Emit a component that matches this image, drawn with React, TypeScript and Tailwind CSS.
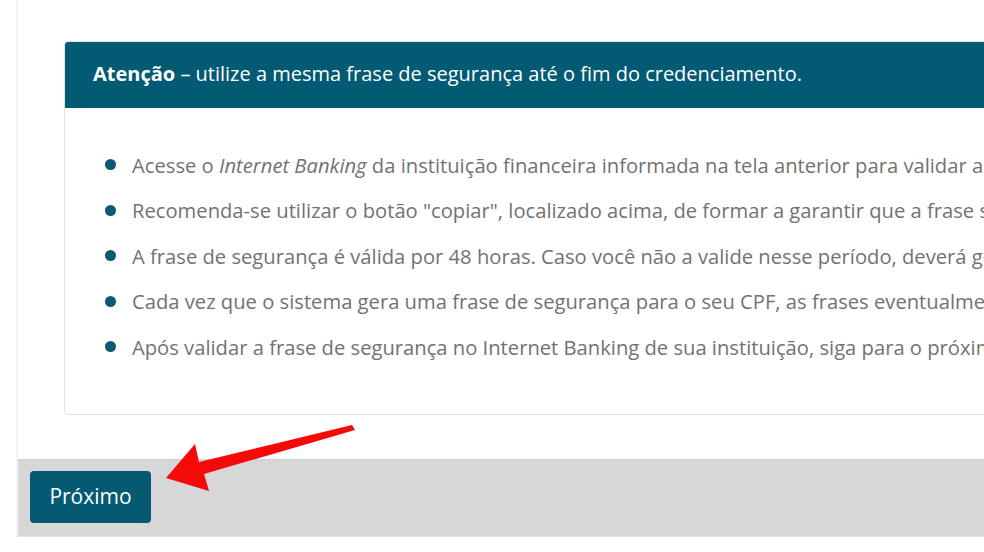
import React from 'react';

const ITEMS: React.ReactNode[] = [
  <>Acesse o <em>Internet Banking</em> da instituição financeira informada na tela anterior para validar a frase de segurança.</>,
  <>Recomenda-se utilizar o botão "copiar", localizado acima, de formar a garantir que a frase seja copiada corretamente.</>,
  <>A frase de segurança é válida por 48 horas. Caso você não a valide nesse período, deverá gerar uma nova frase.</>,
  <>Cada vez que o sistema gera uma frase de segurança para o seu CPF, as frases eventualmente geradas antes perdem a validade.</>,
  <>Após validar a frase de segurança no Internet Banking de sua instituição, siga para o próximo passo.</>,
];

function Arrow() {
  return (
    <svg
      className="absolute left-0 top-0 pointer-events-none"
      width="984"
      height="552"
      viewBox="0 0 984 552"
    >
      <polygon
        points="166,478 195,444 199,462 352,425 355,430 204,474 209,491"
        fill="#f50a0a"
      />
    </svg>
  );
}

export default function App() {
  return (
    <div
      className="relative w-[984px] h-[552px] overflow-hidden bg-white"
      style={{ fontFamily: '"Open Sans", "Noto Sans", sans-serif' }}
    >
      <div className="ml-4 h-[537px] border-l-2 border-[#f3f3f3] flex flex-col">
        <div className="pl-[46px] pt-[41px] h-[459px]">
          <div className="w-[1200px] rounded-[4px] border border-[#e2e2e2] overflow-hidden">
            <div className="bg-[#025a73] h-[66px] flex items-center pl-[28px] pb-[2px] text-white text-[20px]">
              <span className="font-bold">Atenção</span>
              <span>&nbsp;– utilize a mesma frase de segurança até o fim do credenciamento.</span>
            </div>
            <ul className="pt-[34px] pb-[44px] pl-[40px]">
              {ITEMS.map((item, i) => (
                <li key={i} className="h-[45.5px] flex items-center text-[20.2px] text-[#727272] whitespace-nowrap">
                  <span className="w-[11px] h-[11px] rounded-full bg-[#0a5a73] mr-[16px] shrink-0" />
                  <span>{item}</span>
                </li>
              ))}
            </ul>
          </div>
        </div>
        <div className="flex-1 bg-[#d7d7d7] border-t border-[#d0d0d0] border-b border-b-[#e4e4e4] pl-3 pt-[11px]">
          <button className="w-[121px] h-[52px] rounded-[4px] bg-[#035a72] text-white text-[21px]">
            Próximo
          </button>
        </div>
      </div>
      <Arrow />
    </div>
  );
}
